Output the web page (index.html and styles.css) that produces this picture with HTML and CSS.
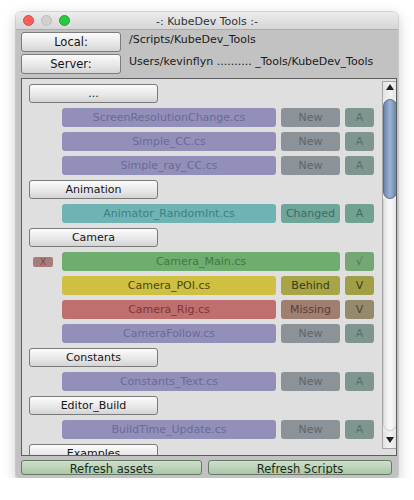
FILE: index.html
```html
<!DOCTYPE html>
<html>
<head>
<meta charset="utf-8">
<link rel="stylesheet" href="styles.css">
</head>
<body>
<div class="window">
  <div class="titlebar">
    <div class="lights">
      <span class="light red"></span>
      <span class="light gray"></span>
      <span class="light green"></span>
    </div>
    <div class="title">-: KubeDev Tools :-</div>
  </div>
  <div class="body">
    <div class="pathrow">
      <div class="btn pathbtn">Local:</div>
      <div class="pathtext">/Scripts/KubeDev_Tools</div>
    </div>
    <div class="pathrow">
      <div class="btn pathbtn">Server:</div>
      <div class="pathtext">Users/kevinflyn .......... _Tools/KubeDev_Tools</div>
    </div>
    <div class="scrollview">
      <div class="list">
        <div class="btn folder">...</div>
        <div class="row"><div class="lead"></div><div class="cell name c-new">ScreenResolutionChange.cs</div><div class="cell status s-new">New</div><div class="cell letter l-new">A</div></div>
        <div class="row"><div class="lead"></div><div class="cell name c-new">Simple_CC.cs</div><div class="cell status s-new">New</div><div class="cell letter l-new">A</div></div>
        <div class="row"><div class="lead"></div><div class="cell name c-new">Simple_ray_CC.cs</div><div class="cell status s-new">New</div><div class="cell letter l-new">A</div></div>
        <div class="btn folder">Animation</div>
        <div class="row"><div class="lead"></div><div class="cell name c-changed">Animator_RandomInt.cs</div><div class="cell status s-changed">Changed</div><div class="cell letter l-changed">A</div></div>
        <div class="btn folder">Camera</div>
        <div class="row"><div class="lead"><span class="xbtn">X</span></div><div class="cell name wide c-ok">Camera_Main.cs</div><div class="cell letter l-ok">√</div></div>
        <div class="row"><div class="lead"></div><div class="cell name c-behind">Camera_POI.cs</div><div class="cell status s-behind">Behind</div><div class="cell letter l-behind">V</div></div>
        <div class="row"><div class="lead"></div><div class="cell name c-missing">Camera_Rig.cs</div><div class="cell status s-missing">Missing</div><div class="cell letter l-missing">V</div></div>
        <div class="row"><div class="lead"></div><div class="cell name c-new">CameraFollow.cs</div><div class="cell status s-new">New</div><div class="cell letter l-new">A</div></div>
        <div class="btn folder">Constants</div>
        <div class="row"><div class="lead"></div><div class="cell name c-new">Constants_Text.cs</div><div class="cell status s-new">New</div><div class="cell letter l-new">A</div></div>
        <div class="btn folder">Editor_Build</div>
        <div class="row"><div class="lead"></div><div class="cell name c-new">BuildTime_Update.cs</div><div class="cell status s-new">New</div><div class="cell letter l-new">A</div></div>
        <div class="btn folder">Examples</div>
      </div>
      <div class="scrollbar">
        <div class="arrow up">
          <svg width="8" height="6" viewBox="0 0 8 6"><polygon points="4,0 8,6 0,6" fill="#222"/></svg>
        </div>
        <div class="track">
          <div class="thumb"></div>
          <div class="rest"></div>
        </div>
        <div class="arrow down">
          <svg width="8" height="6" viewBox="0 0 8 6"><polygon points="0,0 8,0 4,6" fill="#222"/></svg>
        </div>
      </div>
    </div>
    <div class="bottom">
      <div class="gbtn">Refresh assets</div>
      <div class="gbtn">Refresh Scripts</div>
    </div>
  </div>
</div>
</body>
</html>
```

FILE: styles.css
```css
html, body {
  margin: 0;
  padding: 0;
  background: #ffffff;
}
body {
  font-family: "DejaVu Sans", "Liberation Sans", sans-serif;
  font-size: 11px;
  color: #111;
}
.window {
  margin: 12px 0 0 16px;
  width: 382px;
  height: 466px;
  border-radius: 5px 5px 3px 3px;
  overflow: hidden;
  box-shadow: 0 4px 14px rgba(0,0,0,0.22), 0 0 0 1px rgba(0,0,0,0.12);
  display: flex;
  flex-direction: column;
}
.titlebar {
  height: 17px;
  flex: none;
  background: linear-gradient(#ececec, #d6d6d6);
  border-bottom: 1px solid #acacac;
  position: relative;
  display: flex;
  align-items: center;
  justify-content: center;
}
.lights {
  position: absolute;
  left: 7px;
  top: 3px;
  display: flex;
  gap: 7px;
}
.light {
  width: 11px;
  height: 11px;
  border-radius: 50%;
  box-sizing: border-box;
}
.light.red { background: #fc5f57; border: 1px solid #df4744; }
.light.gray { background: #d0d0d0; border: 1px solid #bcbcbc; }
.light.green { background: #28c840; border: 1px solid #1aab29; }
.title {
  font-size: 11px;
  color: #333;
  margin-top: 1px;
}
.body {
  flex: 1;
  background: #c2c2c2;
  padding: 2px 1px 0 5px;
  display: flex;
  flex-direction: column;
  min-height: 0;
}
.pathrow {
  display: flex;
  align-items: center;
  height: 20px;
  margin-bottom: 2px;
}
.btn {
  box-sizing: border-box;
  border: 1px solid #7b7b7b;
  border-radius: 3px;
  background: linear-gradient(#fbfbfb, #e6e6e6 60%, #d4d4d4);
  text-align: center;
  color: #151515;
}
.pathbtn {
  width: 100px;
  height: 20px;
  line-height: 18px;
  font-size: 11.5px;
}
.pathtext {
  margin-left: 8px;
  font-size: 11px;
  color: #1a1a1a;
  margin-top: -5px;
}
.scrollview {
  margin-top: 2px;
  height: 378px;
  box-sizing: border-box;
  border: 1px solid #5e5e5e;
  background: #dfdfdf;
  display: flex;
  overflow: hidden;
  flex: none;
}
.list {
  width: 356px;
  padding: 5px 0 0 0;
  display: flex;
  flex-direction: column;
  gap: 5px;
  flex: none;
}
.folder {
  margin-left: 7px;
  width: 129px;
  height: 19px;
  line-height: 17px;
  font-size: 11px;
  flex: none;
}
.row {
  display: flex;
  height: 19px;
  flex: none;
}
.lead {
  width: 40px;
  flex: none;
  display: flex;
  align-items: center;
}
.xbtn {
  margin-left: 11px;
  width: 20px;
  height: 10px;
  border-radius: 2px;
  background: #a87c7c;
  color: #7c4a4a;
  font-size: 9px;
  line-height: 10px;
  text-align: center;
}
.cell {
  border-radius: 3px;
  height: 19px;
  line-height: 19px;
  text-align: center;
  font-size: 11px;
  flex: none;
}
.name { width: 214px; margin-right: 5px; }
.name.wide { width: 278px; }
.status { width: 59px; margin-right: 5px; }
.letter { width: 29px; }

.c-new { background: #9290b9; color: #6b699b; }
.s-new { background: #8b9298; color: #5b6670; }
.l-new { background: #7f958f; color: #55706a; }

.c-changed { background: #6fb4b4; color: #3e8081; }
.s-changed { background: #6fa69a; color: #3d6c63; }
.l-changed { background: #71a291; color: #3e6d5e; }

.c-ok { background: #6fac6f; color: #3d7a3e; }
.l-ok { background: #74a774; color: #437a43; }

.c-behind { background: #cfc041; color: #4e4512; }
.s-behind { background: #a7a546; color: #3b3a14; }
.l-behind { background: #a09f45; color: #3d3c16; }

.c-missing { background: #c06f6f; color: #7b3636; }
.s-missing { background: #a07f70; color: #593f36; }
.l-missing { background: #958a6c; color: #4c4232; }

.scrollbar {
  width: 16px;
  margin: 2px 0 0 4px;
  height: 368px;
  display: flex;
  flex-direction: column;
  box-sizing: border-box;
  border: 1px solid #a6a6a6;
  background: #ececec;
  flex: none;
}
.arrow {
  height: 16px;
  flex: none;
  display: flex;
  align-items: center;
  justify-content: center;
  background: linear-gradient(90deg, #e2e2e2, #f2f2f2, #e2e2e2);
}
.arrow.up { align-items: flex-start; padding-top: 2px; box-sizing: border-box; }
.arrow.down { align-items: center; }
.track {
  flex: 1;
  display: flex;
  flex-direction: column;
  padding: 1px 0;
}
.thumb {
  height: 100px;
  box-sizing: border-box;
  border: 1px solid #566e96;
  border-radius: 7px;
  background: linear-gradient(90deg, #6c85ad, #9db2d2 50%, #6c85ad);
  flex: none;
}
.rest {
  flex: 1;
  border-radius: 0 0 7px 7px;
  border: 1px solid #cfcfcf;
  border-top: none;
  background: linear-gradient(90deg, #e4e4e4, #fafafa 50%, #e4e4e4);
}
.bottom {
  display: grid;
  grid-template-columns: 181px 184px;
  gap: 6px;
  margin-top: 4px;
}
.gbtn {
  box-sizing: border-box;
  height: 15px;
  border: 1px solid #687868;
  border-radius: 3px;
  background: linear-gradient(#cde0cb, #aac7a7);
  font-size: 11.5px;
  line-height: 17px;
  text-align: center;
  color: #1b2a1b;
  overflow: hidden;
}
```
